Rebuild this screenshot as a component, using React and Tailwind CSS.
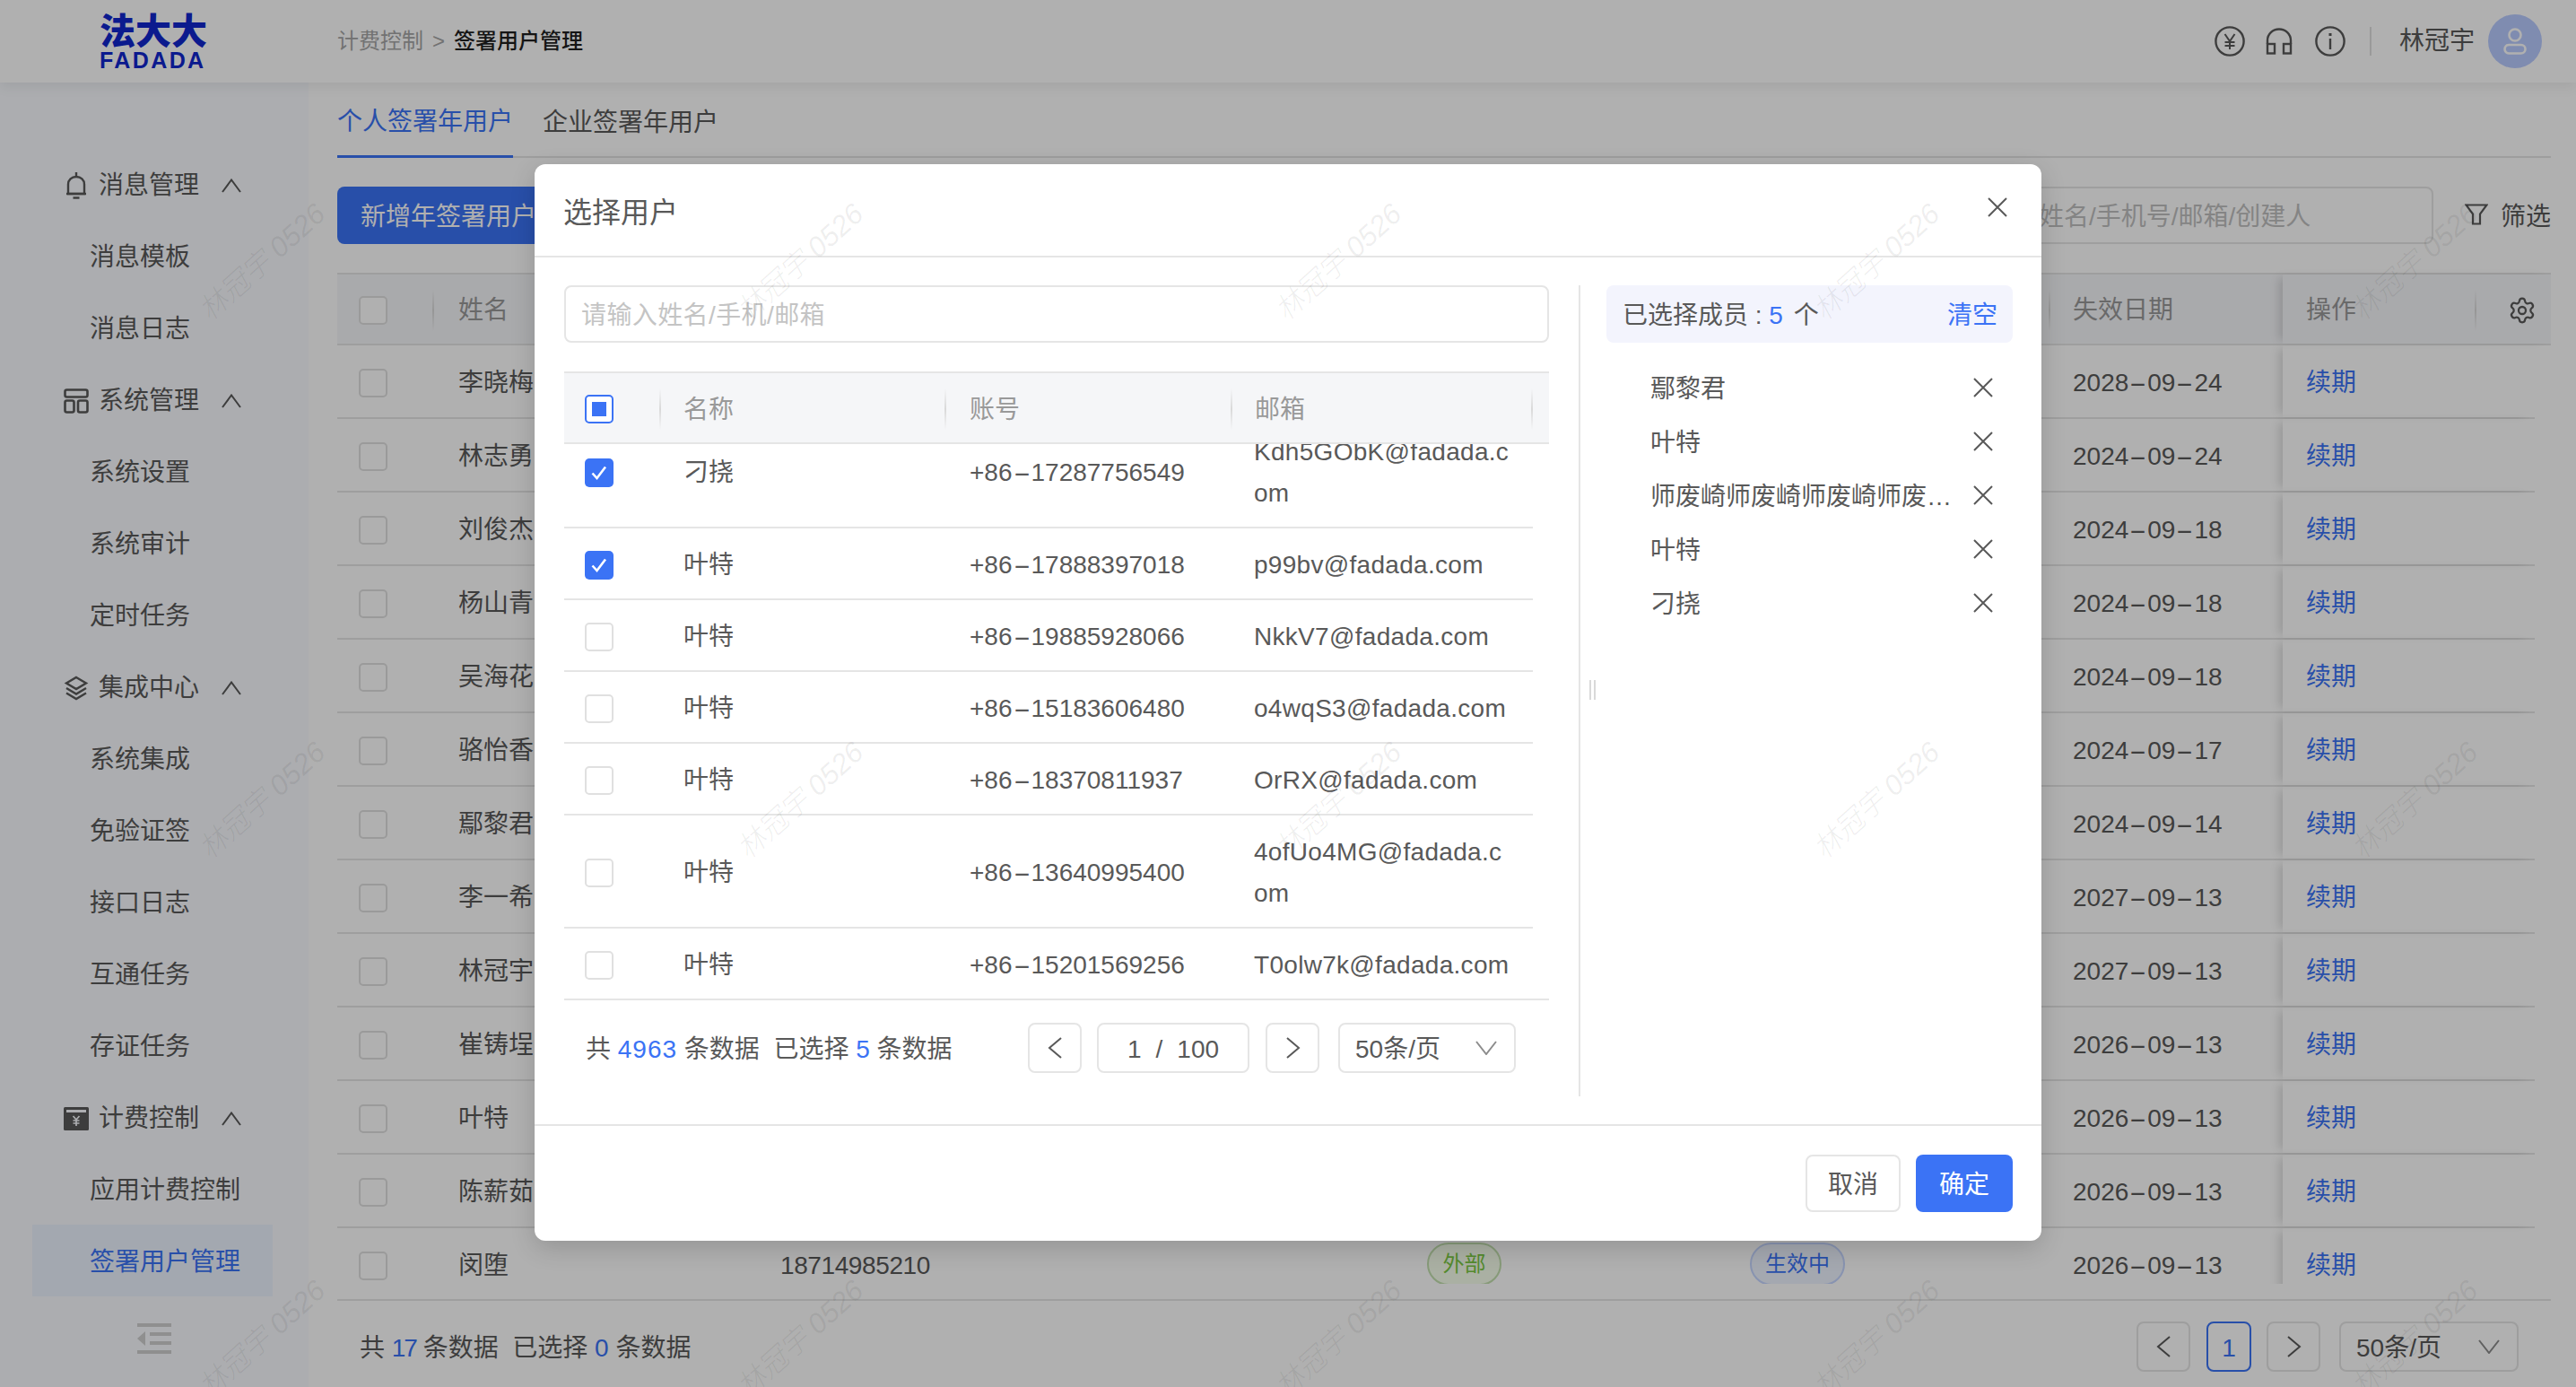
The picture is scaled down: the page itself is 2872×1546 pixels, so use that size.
import { Settings } from 'lucide-react'

const FONT = "font-['Liberation_Sans','Noto_Sans_CJK_SC',sans-serif]"

const menu = [
  { icon: 'bell', label: '消息管理', items: ['消息模板', '消息日志'] },
  { icon: 'system', label: '系统管理', items: ['系统设置', '系统审计', '定时任务'] },
  { icon: 'layers', label: '集成中心', items: ['系统集成', '免验证签', '接口日志', '互通任务', '存证任务'] },
  { icon: 'billing', label: '计费控制', items: ['应用计费控制', '签署用户管理'] },
]

const users = [
  ['李晓梅', '2028-09-24'],
  ['林志勇', '2024-09-24'],
  ['刘俊杰', '2024-09-18'],
  ['杨山青', '2024-09-18'],
  ['吴海花', '2024-09-18'],
  ['骆怡香', '2024-09-17'],
  ['鄢黎君', '2024-09-14'],
  ['李一希', '2027-09-13'],
  ['林冠宇', '2027-09-13'],
  ['崔铸埕', '2026-09-13'],
  ['叶特', '2026-09-13'],
  ['陈薪茹', '2026-09-13'],
  ['闵堕', '2026-09-13', '18714985210'],
]

const pickRows = [
  { name: '刁挠', phone: '+86-17287756549', email: 'Kdh5GObK@fadada.com', checked: true },
  { name: '叶特', phone: '+86-17888397018', email: 'p99bv@fadada.com', checked: true },
  { name: '叶特', phone: '+86-19885928066', email: 'NkkV7@fadada.com' },
  { name: '叶特', phone: '+86-15183606480', email: 'o4wqS3@fadada.com' },
  { name: '叶特', phone: '+86-18370811937', email: 'OrRX@fadada.com' },
  { name: '叶特', phone: '+86-13640995400', email: '4ofUo4MG@fadada.com' },
  { name: '叶特', phone: '+86-15201569256', email: 'T0olw7k@fadada.com' },
]

const picked = ['鄢黎君', '叶特', '师废崎师废崎师废崎师废崎师废崎', '叶特', '刁挠']

function Dashed({ text }) {
  const parts = text.split('-')
  return (
    <span>
      {parts.map((part, i) => (
        <span key={i}>
          {i > 0 && <span className="inline-block w-[21px] scale-x-[2.1] text-center">-</span>}
          {part}
        </span>
      ))}
    </span>
  )
}

function Cross({ size = 22 }) {
  return (
    <svg width={size} height={size} viewBox="0 0 22 22" fill="none" stroke="#595959" strokeWidth="2">
      <path d="M1 1L21 21M21 1L1 21" />
    </svg>
  )
}

function ChevronUp({ color = '#595959' }) {
  return (
    <svg width="22" height="16" viewBox="0 0 22 16" fill="none" stroke={color} strokeWidth="2">
      <path d="M1 15L11 1.5L21 15" />
    </svg>
  )
}

function ChevronDown() {
  return (
    <svg width="24" height="16" viewBox="0 0 24 16" fill="none" stroke="#8c8c8c" strokeWidth="2">
      <path d="M1 1L12 15L23 1" />
    </svg>
  )
}

function ChevronSide({ right = false }) {
  return (
    <svg width="17" height="24" viewBox="0 0 17 24" fill="none" stroke="#595959" strokeWidth="2">
      <path d={right ? 'M2 1L15 12L2 23' : 'M15 1L2 12L15 23'} />
    </svg>
  )
}

function MenuIcon({ name }) {
  if (name === 'bell') {
    return (
      <svg width="28" height="30" viewBox="0 0 28 30" fill="none" stroke="#595959" strokeWidth="2.4">
        <path d="M5 24V13.5C5 8.5 8.8 5 14 5C19.2 5 23 8.5 23 13.5V24H5Z" />
        <path d="M3 24H25" />
        <path d="M14 0V4M10.5 28.5H17.5" />
      </svg>
    )
  }
  if (name === 'system') {
    return (
      <svg width="28" height="28" viewBox="0 0 28 28" fill="none" stroke="#595959" strokeWidth="2.6">
        <rect x="1.5" y="1.5" width="25" height="8" rx="2" />
        <rect x="1.5" y="13.5" width="10" height="13" rx="2" />
        <rect x="16" y="13.5" width="10.5" height="13" rx="2" />
      </svg>
    )
  }
  if (name === 'layers') {
    return (
      <svg width="28" height="28" viewBox="0 0 28 28" fill="none" stroke="#595959" strokeWidth="2.4">
        <path d="M14 2L25 8.5L14 15L3 8.5L14 2Z" />
        <path d="M3 14L14 20.5L25 14" />
        <path d="M3 19.5L14 26L25 19.5" />
      </svg>
    )
  }
  return (
    <svg width="28" height="26" viewBox="0 0 28 26">
      <rect width="28" height="26" rx="1.5" fill="#595959" />
      <rect x="3" y="3" width="22" height="3" fill="#f9fbff" />
      <path d="M10.5 10L14 14L17.5 10M14 14V21M10.5 15H17.5M10.5 18H17.5" fill="none" stroke="#f9fbff" strokeWidth="1.7" />
    </svg>
  )
}

function Checkbox({ state }) {
  if (state === 'checked') {
    return (
      <span className="flex h-[32px] w-[32px] shrink-0 items-center justify-center rounded-[5px] bg-[#3b73f5]">
        <svg width="20" height="20" viewBox="0 0 20 20" fill="none" stroke="#fff" strokeWidth="2.6">
          <path d="M2.5 10.5L7.5 16L17 3.5" />
        </svg>
      </span>
    )
  }
  if (state === 'partial') {
    return (
      <span className="flex h-[32px] w-[32px] shrink-0 items-center justify-center rounded-[5px] border-2 border-[#3b73f5] bg-white">
        <span className="h-[16px] w-[16px] bg-[#3b73f5]" />
      </span>
    )
  }
  return <span className="h-[32px] w-[32px] shrink-0 rounded-[5px] border-2 border-[#e0e0e0] bg-white" />
}

function ColSep() {
  return <span className="h-[46px] w-[2px] shrink-0 bg-linear-to-b from-transparent via-[#d9d9d9] to-transparent" />
}

function PageBtn({ right = false }) {
  return (
    <button className="flex h-[56px] w-[60px] items-center justify-center rounded-[8px] border-2 border-[#e5e5e5] bg-white">
      <ChevronSide right={right} />
    </button>
  )
}

function SizeSelect({ width }) {
  return (
    <div className={`flex h-[56px] items-center justify-between rounded-[8px] border-2 border-[#e5e5e5] bg-white pl-[17px] pr-[19px] ${width}`}>
      <span className="pt-[3px]">50条/页</span>
      <ChevronDown />
    </div>
  )
}

function Header() {
  return (
    <header className="relative flex h-[92px] shrink-0 items-center bg-white pr-[38px] shadow-[0_4px_14px_rgba(0,0,0,0.08)]">
      <div className="flex w-[376px] shrink-0 flex-col pl-[111px] text-[#1026ce]">
        <span className="text-[40px] font-black leading-[38px]">法大大</span>
        <span className="mt-[3px] text-[25px] font-bold leading-[20px] tracking-[2.4px]">FADADA</span>
      </div>
      <div className="flex items-center text-[24px] text-[#a6a6a6]">
        <span>计费控制</span>
        <span className="mx-[10px]">&gt;</span>
        <span className="font-medium text-[#1f1f1f]">签署用户管理</span>
      </div>
      <div className="ml-auto flex items-center">
        <svg width="34" height="34" viewBox="0 0 34 34" fill="none" stroke="#595959" strokeWidth="2.4">
          <circle cx="17" cy="17" r="15.6" />
          <path d="M11.5 9L17 17L22.5 9M17 17V26M11.5 18H22.5M11.5 22H22.5" strokeWidth="2" />
        </svg>
        <svg className="ml-[23px]" width="30" height="30" viewBox="0 0 30 30" fill="none" stroke="#595959" strokeWidth="2.4">
          <path d="M2 18V14C2 6.8 7.8 1.5 15 1.5C22.2 1.5 28 6.8 28 14V18" />
          <rect x="2" y="18" width="8" height="10.5" />
          <rect x="20" y="18" width="8" height="10.5" />
        </svg>
        <svg className="ml-[25px]" width="34" height="34" viewBox="0 0 34 34" fill="none" stroke="#595959" strokeWidth="2.4">
          <circle cx="17" cy="17" r="15.6" />
          <path d="M17 14V26" />
          <path d="M17 8V11" strokeWidth="3" />
        </svg>
        <span className="ml-[27px] h-[32px] w-[2px] bg-[#e0e0e0]" />
        <span className="ml-[31px] text-[28px]">林冠宇</span>
        <span className="ml-[15px] flex h-[60px] w-[60px] items-center justify-center rounded-full bg-[#b9cbff]">
          <svg width="26" height="30" viewBox="0 0 26 30" fill="none" stroke="#fff" strokeWidth="2.6">
            <circle cx="13" cy="8" r="6.5" />
            <rect x="1.5" y="19" width="23" height="9.5" rx="4.75" />
          </svg>
        </span>
      </div>
    </header>
  )
}

function Sidebar() {
  return (
    <aside className="flex w-[344px] shrink-0 flex-col bg-[#f9fbff] pt-[73px]">
      {menu.map((group) => (
        <div key={group.label}>
          <div className="flex h-[80px] items-center pl-[71px] pt-[3px]">
            <span className="flex w-[28px] justify-center">
              <MenuIcon name={group.icon} />
            </span>
            <span className="ml-[11px]">{group.label}</span>
            <span className="ml-[25px]">
              <ChevronUp />
            </span>
          </div>
          {group.items.map((item) => (
            <div
              key={item}
              className={`ml-[36px] flex h-[80px] w-[268px] items-center pl-[64px] pt-[3px] ${item === '签署用户管理' ? 'bg-[#edf3ff] text-[#3b73f5]' : ''}`}
            >
              {item}
            </div>
          ))}
        </div>
      ))}
      <div className="mt-[30px] flex justify-center">
        <svg width="38" height="34" viewBox="0 0 38 34" fill="#cfcfcf">
          <rect width="38" height="4" />
          <rect x="14" y="10" width="24" height="4" />
          <rect x="14" y="20" width="24" height="4" />
          <rect y="30" width="38" height="4" />
          <path d="M9 9V25L0 17Z" />
        </svg>
      </div>
    </aside>
  )
}

function BackgroundPage() {
  return (
    <main className="flex min-w-0 flex-1 flex-col pl-[32px] pr-[28px]">
      <div className="flex h-[84px] shrink-0 items-end gap-[33px] border-b-2 border-[#e5e5e5]">
        <span className="-mb-[2px] border-b-[3px] border-[#3b73f5] pb-[17px] leading-[40px] text-[#3b73f5]">个人签署年用户</span>
        <span className="pb-[17px] leading-[40px]">企业签署年用户</span>
      </div>

      <div className="mt-[32px] flex h-[64px] shrink-0 items-center justify-between">
        <button className="h-[64px] rounded-[8px] bg-[#3b73f5] px-[26px] pt-[3px] text-white">新增年签署用户</button>
        <div className="flex items-center">
          <input
            className="h-[64px] w-[553px] rounded-[8px] border-2 border-[#e5e5e5] bg-white pl-[27px] pt-[3px] outline-none placeholder:text-[#bfbfbf]"
            placeholder="请输入姓名/手机号/邮箱/创建人"
          />
          <svg className="ml-[35px] -mt-[2px]" width="26" height="24" viewBox="0 0 26 24" fill="none" stroke="#595959" strokeWidth="2.2">
            <path d="M1.5 1.5H24.5L17 11.5V22.5H9V11.5L1.5 1.5Z" />
          </svg>
          <span className="ml-[14px] pt-[3px]">筛选</span>
        </div>
      </div>

      <div className="mt-[32px] flex h-[81px] shrink-0 items-center border-y-2 border-[#e5e5e5] bg-[#f5f6f9] pt-[3px] text-[#999]">
        <span className="flex w-[108px] shrink-0 items-center justify-between pl-[24px]">
          <Checkbox />
          <ColSep />
        </span>
        <span className="w-[1800px] shrink-0 pl-[27px]">姓名</span>
        <ColSep />
        <span className="w-[259px] shrink-0 pl-[25px]">失效日期</span>
        <span className="-mt-[3px] flex flex-1 items-center self-stretch bg-[#f5f6f9] pl-[26px] pt-[3px] shadow-[-8px_0_10px_-4px_rgba(0,0,0,0.14)]">
          <span className="w-[188px]">操作</span>
          <ColSep />
          <Settings className="ml-[35px]" size={32} strokeWidth={1.7} color="#595959" />
        </span>
      </div>

      <div className="h-[1046px] shrink-0 overflow-hidden">
        {users.map(([name, date, phone]) => (
          <div key={name} className="flex h-[82px] w-[2450px] items-center border-b-2 border-[#e5e5e5] pt-[4px]">
            <span className="flex w-[108px] shrink-0 pl-[24px]">
              <Checkbox />
            </span>
            <span className="w-[360px] shrink-0 pl-[27px]">{name}</span>
            <span className="w-[720px] shrink-0 pl-[26px] tracking-[-0.4px]">{phone}</span>
            <span className="w-[360px] shrink-0 pl-[27px]">
              {phone && (
                <span className="-mt-[4px] flex h-[48px] w-[83px] items-center justify-center rounded-full border-2 border-[#c3e0ae] bg-[#f6ffed] text-[24px] text-[#7ac943]">
                  外部
                </span>
              )}
            </span>
            <span className="w-[360px] shrink-0 pl-[27px]">
              {phone && (
                <span className="-mt-[4px] flex h-[48px] w-[106px] items-center justify-center rounded-full border-2 border-[#c5d6ff] bg-[#eef3ff] text-[24px] text-[#3b73f5]">
                  生效中
                </span>
              )}
            </span>
            <span className="w-[261px] shrink-0 pl-[27px]">
              <Dashed text={date} />
            </span>
            <span className="-mt-[4px] flex flex-1 items-center self-stretch pl-[26px] pt-[4px] text-[#3b73f5] shadow-[-8px_0_10px_-4px_rgba(0,0,0,0.14)]">续期</span>
          </div>
        ))}
      </div>

      <div className="mt-[17px] flex items-center justify-between border-t-2 border-[#e5e5e5] pl-[25px] pr-[36px] pt-[23px]">
        <span className="pt-[3px]">
          共 <span className="tracking-[-2px] text-[#3b73f5]">17</span> 条数据&nbsp;&nbsp;已选择 <span className="text-[#3b73f5]">0</span> 条数据
        </span>
        <div className="flex items-center">
          <PageBtn />
          <span className="ml-[18px] flex h-[56px] w-[50px] items-center justify-center rounded-[8px] border-2 border-[#3b73f5] bg-white pt-[3px] text-[#3b73f5]">1</span>
          <span className="ml-[17px]">
            <PageBtn right />
          </span>
          <span className="ml-[21px]">
            <SizeSelect width="w-[200px]" />
          </span>
        </div>
      </div>
    </main>
  )
}

function PickTable() {
  return (
    <>
      <div className="mt-[32px] flex h-[81px] w-[1098px] items-center border-y-2 border-[#e5e5e5] bg-[#f5f6f8] pt-[3px] text-[#999]">
        <span className="flex w-[108px] shrink-0 items-center justify-between pl-[23px]">
          <Checkbox state="partial" />
          <ColSep />
        </span>
        <span className="flex w-[318px] shrink-0 items-center justify-between pl-[25px]">
          <span className="pt-[2px]">名称</span>
          <ColSep />
        </span>
        <span className="flex w-[319px] shrink-0 items-center justify-between pl-[26px]">
          <span className="pt-[2px]">账号</span>
          <ColSep />
        </span>
        <span className="flex w-[335px] shrink-0 items-center justify-between pl-[25px]">
          <span className="pt-[2px]">邮箱</span>
          <ColSep />
        </span>
      </div>
      <div className="h-[620px] w-[1098px] overflow-hidden border-b-2 border-[#e5e5e5]">
        <div className="-mt-[32px]">
          {pickRows.map((row) => (
            <div key={row.phone} className="flex w-[1080px] items-center border-b-2 border-[#e5e5e5] pb-[14px] pt-[18px] leading-[46px] last:border-b-0">
              <span className="flex w-[107px] shrink-0 pl-[23px]">
                <Checkbox state={row.checked ? 'checked' : undefined} />
              </span>
              <span className="w-[318px] shrink-0 pl-[26px]">{row.name}</span>
              <span className="w-[319px] shrink-0 pl-[27px]">
                <Dashed text={row.phone} />
              </span>
              <span className="w-[315px] shrink-0 break-all pl-[25px] tracking-[0.3px]">{row.email}</span>
            </div>
          ))}
        </div>
      </div>
      <div className="mt-[25px] flex items-center pl-[24px]">
        <span className="w-[493px] shrink-0 pt-[3px]">
          共 <span className="tracking-[1px] text-[#3b73f5]">4963</span> 条数据&nbsp;&nbsp;已选择 <span className="text-[#3b73f5]">5</span> 条数据
        </span>
        <PageBtn />
        <span className="ml-[17px] flex h-[56px] w-[170px] items-center justify-center gap-[16px] rounded-[8px] border-2 border-[#e5e5e5] pt-[3px]">
          <span>1</span>
          <span>/</span>
          <span>100</span>
        </span>
        <span className="ml-[18px]">
          <PageBtn right />
        </span>
        <span className="ml-[21px]">
          <SizeSelect width="w-[198px]" />
        </span>
      </div>
    </>
  )
}

function SelectDialog() {
  return (
    <div className="absolute left-[596px] top-[183px] z-30 flex h-[1200px] w-[1680px] flex-col rounded-[12px] bg-white shadow-[0_8px_28px_rgba(0,0,0,0.16)]">
      <div className="flex h-[104px] shrink-0 items-center justify-between border-b-2 border-[#e5e5e5] pl-[32px] pr-[38px]">
        <span className="mt-[6px] text-[32px]">选择用户</span>
        <span className="-mt-[6px]">
          <Cross />
        </span>
      </div>

      <div className="flex h-[966px] shrink-0 py-[31px] pl-[33px]">
        <div className="w-[1098px] shrink-0">
          <input
            className="h-[64px] w-full rounded-[8px] border-2 border-[#e5e5e5] px-[17px] pt-[3px] tracking-[0.4px] outline-none placeholder:text-[#c4c4c4]"
            placeholder="请输入姓名/手机/邮箱"
          />
          <PickTable />
        </div>

        <div className="relative ml-[33px] w-[2px] shrink-0 bg-[#e5e5e5]">
          <span className="absolute left-[12px] top-[440px] flex gap-[3px]">
            <span className="h-[22px] w-[2px] bg-[#d9d9d9]" />
            <span className="h-[22px] w-[2px] bg-[#d9d9d9]" />
          </span>
        </div>

        <div className="ml-[29px] w-[453px] shrink-0">
          <div className="flex h-[64px] items-center justify-between rounded-[8px] bg-[#f3f4fd] pl-[18px] pr-[17px] pt-[3px]">
            <span>
              已选择成员&nbsp;:&nbsp;<span className="text-[#3b73f5]">5</span>
              <span className="ml-[4px]"> 个</span>
            </span>
            <span className="text-[#3b73f5]">清空</span>
          </div>
          <div className="mt-[20px]">
            {picked.map((name, i) => (
              <div key={i} className="flex h-[60px] items-center justify-between pl-[49px] pr-[22px] pt-[3px]">
                <span className="w-[338px] truncate">{name}</span>
                <span className="-mt-[3px]">
                  <Cross />
                </span>
              </div>
            ))}
          </div>
        </div>
      </div>

      <div className="flex flex-1 items-start justify-end gap-[17px] border-t-2 border-[#e5e5e5] pr-[32px] pt-[32px]">
        <button className="h-[64px] w-[106px] rounded-[8px] border-2 border-[#e5e5e5] bg-white pt-[3px]">取消</button>
        <button className="h-[64px] w-[108px] rounded-[8px] bg-[#3b73f5] pt-[3px] text-white">确定</button>
      </div>
    </div>
  )
}

function Watermarks() {
  const cells = Array.from({ length: 15 })
  return (
    <div className="pointer-events-none absolute -left-[8px] -top-[8px] z-40 grid w-[3000px] grid-cols-[repeat(5,600px)] auto-rows-[600px]">
      {cells.map((_, i) => (
        <div key={i} className="flex items-center justify-center">
          <span className="-rotate-[42deg] whitespace-nowrap text-[32px] font-light italic text-black/[0.07]">林冠宇 0526</span>
        </div>
      ))}
    </div>
  )
}

export default function App() {
  return (
    <div className={`relative flex h-[1546px] w-[2872px] flex-col overflow-hidden bg-white text-[28px] text-[#595959] ${FONT}`}>
      <Header />
      <div className="flex min-h-0 flex-1">
        <Sidebar />
        <BackgroundPage />
      </div>
      <div className="absolute inset-0 z-20 bg-black/[0.31]" />
      <SelectDialog />
      <Watermarks />
    </div>
  )
}
